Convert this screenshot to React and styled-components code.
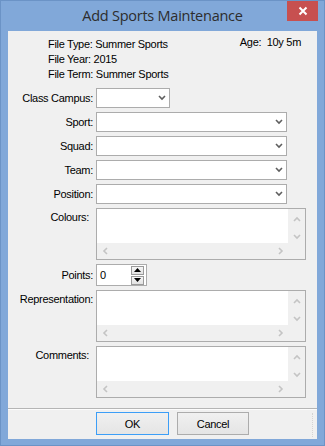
import React from 'react';
import styled, { createGlobalStyle } from 'styled-components';

const GlobalStyle = createGlobalStyle`
	html, body {
		margin: 0;
		padding: 0;
		background: #81a8d9;
	}
	body {
		font-family: 'Liberation Sans', Arial, sans-serif;
		font-size: 11px;
		letter-spacing: -0.3px;
		color: #000;
	}
`;

const Chevron = ({ dir = 'down', color = '#5f5f5f', size = 8 }) => {
	const paths = {
		down: 'M1 2 L4 5 L7 2',
		up: 'M1 6 L4 3 L7 6',
		left: 'M5 1 L2 4 L5 7',
		right: 'M3 1 L6 4 L3 7',
	};
	return (
		<svg width={size} height={size} viewBox="0 0 8 8">
			<path d={paths[dir]} fill="none" stroke={color} strokeWidth="1.6" />
		</svg>
	);
};

const Combo = ({ wide }) => (
	<ComboBox $wide={wide}>
		<Chevron dir="down" />
	</ComboBox>
);

const MemoBox = () => (
	<Memo>
		<MemoText />
		<VScroll>
			<Chevron dir="up" color="#c4c4c4" />
			<Chevron dir="down" color="#c4c4c4" />
		</VScroll>
		<HScroll>
			<Chevron dir="left" color="#c4c4c4" />
			<Chevron dir="right" color="#c4c4c4" />
		</HScroll>
		<Corner />
	</Memo>
);

const App = () => {
	return (
		<>
			<GlobalStyle />
			<Window>
				<TitleBar>
					<Title>Add Sports Maintenance</Title>
					<CloseButton>
						<svg width="10" height="10" viewBox="0 0 10 10">
							<path d="M1.5 1.5 L8.5 8.5 M8.5 1.5 L1.5 8.5" stroke="#fff" strokeWidth="2" />
						</svg>
					</CloseButton>
				</TitleBar>
				<Client>
					<Header>
						<InfoLines>
							<span>File Type: Summer Sports</span>
							<span>File Year: 2015</span>
							<span>File Term: Summer Sports</span>
						</InfoLines>
						<Age>Age:&nbsp;&nbsp;10y 5m</Age>
					</Header>
					<Form>
						<Label>Class Campus:</Label>
						<Combo />
						<Label>Sport:</Label>
						<Combo wide />
						<Label>Squad:</Label>
						<Combo wide />
						<Label>Team:</Label>
						<Combo wide />
						<Label>Position:</Label>
						<Combo wide />
						<Label $top>Colours:</Label>
						<MemoBox />
						<Label>Points:</Label>
						<Spin>
							<SpinValue>0</SpinValue>
							<SpinButtons>
								<SpinButton>
									<svg width="7" height="4" viewBox="0 0 7 4">
										<path d="M0 4 L3.5 0 L7 4 Z" fill="#000" />
									</svg>
								</SpinButton>
								<SpinButton>
									<svg width="7" height="4" viewBox="0 0 7 4">
										<path d="M0 0 L3.5 4 L7 0 Z" fill="#000" />
									</svg>
								</SpinButton>
							</SpinButtons>
						</Spin>
						<Label $top $wideText>Representation:</Label>
						<MemoBox />
						<Label $top>Comments:</Label>
						<MemoBox />
					</Form>
					<Footer>
						<Button $default>OK</Button>
						<Button>Cancel</Button>
						<Grip />
					</Footer>
				</Client>
			</Window>
		</>
	);
};

const Window = styled.div`
	width: 325px;
	height: 446px;
	box-sizing: border-box;
	border: 1px solid #6b93c6;
	background: #81a8d9;
	display: flex;
	flex-direction: column;
`;
const TitleBar = styled.div`
	height: 30px;
	position: relative;
	display: flex;
	align-items: center;
	justify-content: center;
`;
const Title = styled.div`
	font-family: 'Open Sans', 'Liberation Sans', sans-serif;
	font-size: 14.5px;
	letter-spacing: -0.25px;
	color: #2d2d2d;
	margin-top: -1px;
`;
const CloseButton = styled.div`
	position: absolute;
	top: 0;
	right: 6px;
	width: 31px;
	height: 20px;
	background: #c75050;
	display: flex;
	align-items: center;
	justify-content: center;
`;
const Client = styled.div`
	flex: 1;
	margin: 0 7px 6px 7px;
	background: #f0f0f0;
	display: flex;
	flex-direction: column;
`;
const Header = styled.div`
	display: flex;
	justify-content: space-between;
	padding: 4px 16px 0 40px;
	height: 53px;
`;
const InfoLines = styled.div`
	display: flex;
	flex-direction: column;
	padding-top: 2px;
	line-height: 15px;
`;
const Age = styled.div`
	line-height: 15px;
`;
const Form = styled.div`
	display: grid;
	grid-template-columns: 85px 1fr;
	grid-auto-rows: auto;
	column-gap: 3px;
	row-gap: 4px;
	padding-right: 10px;
	height: 320px;
	align-content: start;
`;
const Label = styled.div`
	text-align: right;
	align-self: ${(p) => (p.$top ? 'start' : 'center')};
	padding-top: ${(p) => (p.$top ? '3px' : '0')};
	padding-right: ${(p) => (p.$top && !p.$wideText ? '4px' : '0')};
	white-space: nowrap;
`;
const ComboBox = styled.div`
	box-sizing: border-box;
	height: 20px;
	width: ${(p) => (p.$wide ? '191px' : '74px')};
	border: 1px solid #acacac;
	background: #fff;
	display: flex;
	align-items: center;
	justify-content: flex-end;
	padding-right: 3px;
`;
const Memo = styled.div`
	box-sizing: border-box;
	width: 210px;
	height: 52px;
	border: 1px solid #acacac;
	display: grid;
	grid-template-columns: 1fr 17px;
	grid-template-rows: 1fr 16px;
	background: #f0f0f0;
`;
const MemoText = styled.div`
	background: #fff;
`;
const VScroll = styled.div`
	display: flex;
	flex-direction: column;
	align-items: center;
	justify-content: space-between;
	padding: 6px 0 2px;
`;
const HScroll = styled.div`
	display: flex;
	align-items: center;
	justify-content: space-between;
	padding: 0 4px 0 5px;
`;
const Corner = styled.div`
	background: #f0f0f0;
`;
const Spin = styled.div`
	box-sizing: border-box;
	width: 51px;
	height: 22px;
	border: 1px solid #acacac;
	background: #fff;
	display: flex;
	align-items: center;
	justify-content: space-between;
	padding: 0 2px 0 3px;
`;
const SpinValue = styled.span`
	font-size: 11px;
`;
const SpinButtons = styled.div`
	display: flex;
	flex-direction: column;
	gap: 1px;
`;
const SpinButton = styled.div`
	box-sizing: border-box;
	width: 13px;
	height: 9px;
	border: 1px solid #9a9a9a;
	background: linear-gradient(#f6f6f6, #e2e2e2);
	display: flex;
	align-items: center;
	justify-content: center;
`;
const Footer = styled.div`
	flex: 1;
	border-top: 1px solid #b5b5b5;
	box-shadow: inset 0 1px 0 #fcfcfc;
	display: flex;
	align-items: flex-start;
	padding: 3px 0 0 88px;
	gap: 8px;
	position: relative;
`;
const Button = styled.div`
	box-sizing: border-box;
	width: ${(p) => (p.$default ? '73px' : '72px')};
	height: 23px;
	border: 1px solid ${(p) => (p.$default ? '#3c9ef7' : '#acacac')};
	background: linear-gradient(#f0f0f0, #e5e5e5);
	display: flex;
	align-items: center;
	justify-content: center;
	font-size: 11px;
`;
const Grip = styled.div`
	position: absolute;
	right: 4px;
	top: 4px;
	bottom: 2px;
	border-right: 1px dotted #d4d4d4;
`;

export default App;
